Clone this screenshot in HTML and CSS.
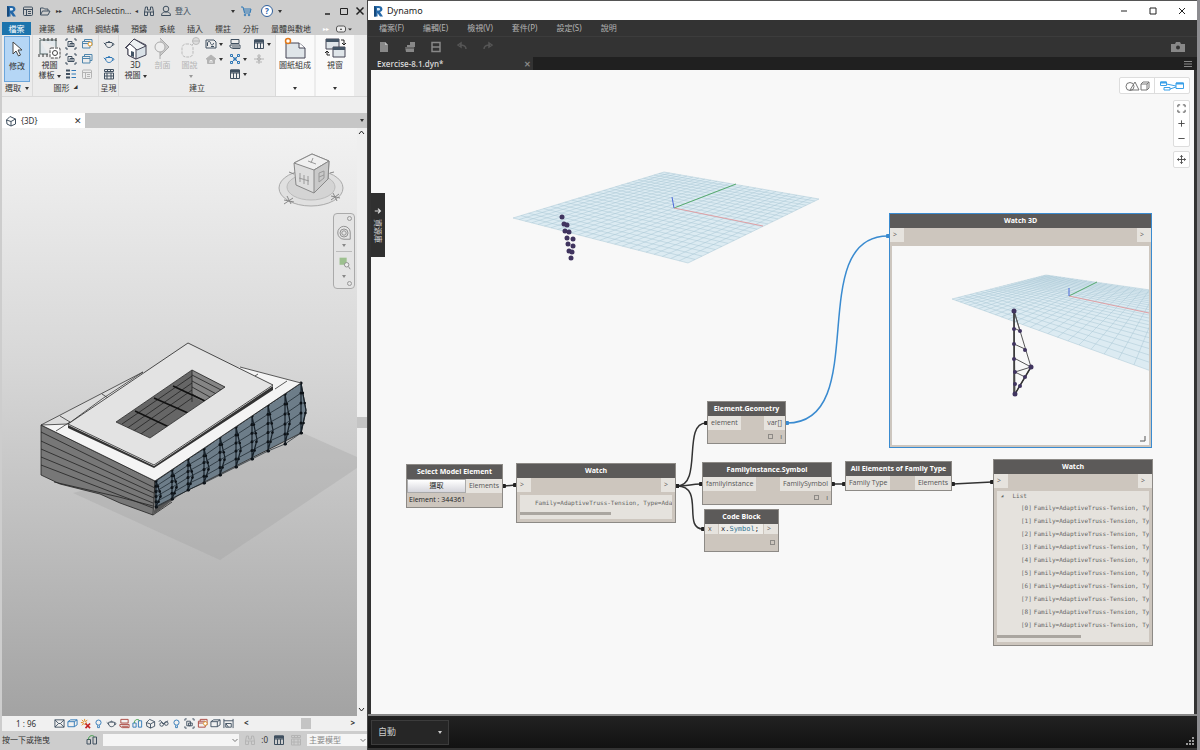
FILE: index.html
```html
<!DOCTYPE html>
<html lang="zh-Hant">
<head>
  <meta charset="UTF-8">
  <meta name="viewport" content="width=device-width, initial-scale=1.0">
  <title>Dynamo</title>
  <link rel="stylesheet" href="styles.css">
</head>
<body>
  <!-- shared icons -->
  <svg class="sprite" aria-hidden="true">
    <symbol id="i-r" viewBox="0 0 12 12"><path d="M2 1h4.500c5 0 5 5.500 1.500 6l3 4.500H8L5.500 8V11.500H2z" fill="#2468a8"/><path d="M5 3h2c1.500 0 1.500 2.500 0 2.500H5z" fill="#dcebf7"/><path d="M2 1l2 1v9.500H2z" fill="#174a7c"/></symbol>
    <symbol id="i-win" viewBox="0 0 12 12"><rect x="1.500" y="2" width="9" height="8.500" rx="1"/><path d="M1.500 4.500h9M4.500 4.500v6M6 6.500h3M6 8.500h3"/></symbol>
    <symbol id="i-open" viewBox="0 0 12 12"><path d="M1.500 10V3h3l1 1H9v2M1.500 10l2-4H11l-2 4z"/></symbol>
    <symbol id="i-find" viewBox="0 0 12 12"><path d="M2.500 2h2v3h3V2h2l1 5v3.500H7.500V7h-3v3.500H1.500V7zM1.500 7h3M7.500 7h3"/></symbol>
    <symbol id="i-user" viewBox="0 0 12 12"><circle cx="6" cy="4" r="2.800"/><path d="M1.500 10.500c0-3 2-3 3-3.500h3c1 .5 3 .5 3 3.500z"/></symbol>
    <symbol id="i-cart" viewBox="0 0 12 12"><path d="M1 2h2l1.500 6h5.500l1-4H3.500M4 6h6.500"/><circle cx="5" cy="10" r=".8"/><circle cx="9" cy="10" r=".8"/></symbol>
    <symbol id="i-box" viewBox="0 0 12 12"><path d="M1 4l3-2h7l-3 2zM1 4v5.500h7V4M8 9.500l3-2V2"/></symbol>
    <symbol id="i-house" viewBox="0 0 12 12"><path d="M1.500 5L5 1.500l5.500 2.500v5L6 11 2 9zM1.500 5L6 6.500v4.500M6 6.500L10.500 4"/></symbol>
    <symbol id="i-home" viewBox="0 0 12 12"><path d="M1 6l5-4 5 4H9.500v4.500h-7V6z" fill="currentColor"/><path d="M5 10V7.500h2V10" stroke="#eee"/></symbol>
    <symbol id="i-crop" viewBox="0 0 12 12"><path d="M1 3V1h2M9 1h2v2M11 9v2H9M3 11H1V9M3 3.500h4v5H3zM5 5.500h4v3H5z"/></symbol>
    <symbol id="i-layers" viewBox="0 0 12 12"><path d="M3.500 3.500v-2h7.500v6H9M1.500 3.500H9v6.500H1.500zM1.500 5.500H9"/></symbol>
    <symbol id="i-gear" viewBox="0 0 12 12"><path d="M3.500 3.500v-2h7.500v6H9M1.500 3.500H9v6.500H1.500zM1.500 5.500H9"/><circle cx="9" cy="6" r="2" stroke="#e09a2c" fill="#fff"/></symbol>
    <symbol id="i-lines" viewBox="0 0 12 12"><path d="M1 2.500h4M1 6h4M1 9.500h4" stroke-width="2"/><path d="M6.500 2.500H11M6.500 6H11M6.500 9.500H11" stroke="#2f78b7"/></symbol>
    <symbol id="i-plan" viewBox="0 0 12 12"><path d="M1 2h8l2 2v6H1z"/><path d="M2.500 8V5c0-2 3-2 3 0s3 3 3 0M6 8.500h3"/></symbol>
    <symbol id="i-pot" viewBox="0 0 12 12"><path d="M3 4.500h6c1.500 3-1 5-3 5s-4-2-3-5zM5 4.500c0-1.500 2-1.500 2 0M3 7L.8 4.800M9.500 5.500c2-.5 2 2-.5 2"/></symbol>
    <symbol id="i-film" viewBox="0 0 12 12"><path d="M1.500 1.500h9v2h-9zM1.500 5h9v6h-9zM4 1.500l1 2M7 1.500l1 2M4 5v6M8 5v6M1.500 8h9"/></symbol>
    <symbol id="i-table" viewBox="0 0 12 12"><path d="M1.500 2h9v8.500h-9zM1.500 5h9M4.500 5v5.500M7.500 5v5.500"/><path d="M1.500 2h9v2h-9z" fill="currentColor"/></symbol>
    <symbol id="i-sheet" viewBox="0 0 12 12"><path d="M2 1.500h8v4H2zM1 7h10v3.500H3.500L1 9z"/><path d="M3 9h7"/></symbol>
    <symbol id="i-nodes" viewBox="0 0 12 12"><path d="M3 3l6 6M9 3L3 9M1.500 1.500h2v2h-2zM8.500 1.500h2v2h-2zM1.500 8.500h2v2h-2zM8.500 8.500h2v2h-2zM5 5h2v2H5z"/></symbol>
    <symbol id="i-scope" viewBox="0 0 12 12"><path d="M6 1v10M1 6h10M4 3h4M3 9h6"/><circle cx="6" cy="6" r="1.500"/></symbol>
    <symbol id="i-bulb" viewBox="0 0 12 12"><circle cx="6" cy="5" r="2.800"/><path d="M5 8v2.500h2V8"/></symbol>
    <symbol id="i-sun" viewBox="0 0 12 12"><path d="M5 1v2M1 5h2M2 2l1.500 1.500M8 2L6.500 3.500M2 8l1.500-1.500" stroke="#e08a1c"/><circle cx="5" cy="5" r="1.800" stroke="#e08a1c"/><path d="M6 6l5 5M11 6l-5 5" stroke="#c32222" stroke-width="1.800"/></symbol>
    <symbol id="i-mail" viewBox="0 0 12 12"><path d="M1 2h10v8H1zM1 2l4 4h2l4-4M1 10l4-4M11 10L7 6"/></symbol>
    <symbol id="i-glass" viewBox="0 0 12 12"><path d="M1 4c1-2 2-2 4 2h2l4-3"/><circle cx="4" cy="7" r="2"/><circle cx="9" cy="6" r="2"/></symbol>
    <symbol id="i-dims" viewBox="0 0 12 12"><path d="M1 1v10M11 1v10M1 3h10M3 6h6v4H3zM3 6l3 4"/></symbol>
    <symbol id="i-plug" viewBox="0 0 12 12"><path d="M1 10V5.500h3.500V10zM7 10V3h3.500v7z"/><path d="M2.500 5.500c0-4 4-5 6-2.500" stroke="#3b9b45"/></symbol>
    <symbol id="i-chev" viewBox="0 0 8 8"><path d="M1.500 3L4 5.500 6.500 3" fill="none" stroke="#777"/></symbol>
  </svg>

  <section class="revit" aria-label="Revit">
    <header class="revit-title">
      <svg class="logo"><use href="#i-r"/></svg>
      <button class="ic" aria-label="視窗"><svg><use href="#i-win"/></svg></button>
      <button class="ic" aria-label="開啟"><svg><use href="#i-open"/></svg></button>
      <span class="more">▸▸</span>
      <span class="doc-name">ARCH-Selectin...</span>
      <span class="more">◂</span>
      <button class="ic" aria-label="搜尋"><svg><use href="#i-find"/></svg></button>
      <button class="ic login"><svg><use href="#i-user"/></svg>登入</button>
      <span class="caret push"></span>
      <button class="ic blue" aria-label="商店"><svg><use href="#i-cart"/></svg></button>
      <button class="help" aria-label="說明">?</button>
      <span class="caret"></span>
      <div class="win-buttons">
        <button aria-label="最小化"><svg viewBox="0 0 10 10"><path d="M2 8h5" stroke-width="1.500"/></svg></button>
        <button aria-label="最大化"><svg viewBox="0 0 10 10"><path d="M1.500 2.500h7v6h-7z"/></svg></button>
        <button aria-label="關閉"><svg viewBox="0 0 10 10"><path d="M1.500 1.500l7 7M8.500 1.500l-7 7" stroke-width="1.500"/></svg></button>
      </div>
    </header>

    <nav class="ribbon-tabs">
      <a class="file" href="#">檔案</a>
      <a href="#">建築</a>
      <a href="#">結構</a>
      <a href="#">鋼結構</a>
      <a href="#">預鑄</a>
      <a href="#">系統</a>
      <a href="#">插入</a>
      <a href="#">標註</a>
      <a href="#">分析</a>
      <a href="#">量體與敷地</a>
      <span class="more light">▸▸</span>
      <svg class="toggle" viewBox="0 0 18 10"><rect x="1.500" y="2" width="9" height="6" rx="2" fill="#eee" stroke="#555"/><path d="M5 6l1-2 1 2zM13 4.500h4l-2 2z" fill="#333"/></svg>
    </nav>

    <div class="ribbon">
      <div class="panel p-select">
        <button class="big active"><svg viewBox="0 0 24 24"><path d="M8 5v12l3-3 2.500 5 2-1-2.500-5h4z" fill="#fff" stroke="#444"/></svg>修改</button>
        <span class="panel-name">選取 <i class="caret"></i></span>
      </div>
      <div class="panel p-graphics">
        <div class="tools">
          <button class="big"><svg viewBox="0 0 24 22"><path d="M2 3h16v7M2 3v14h8" fill="#e2e8ec" stroke="#566"/><path d="M2 2v-1M6 1v3M10 1v3M14 1v3M18 1v3M1 17v3M5 17v3M9 17v3" stroke="#333"/><rect x="12" y="11" width="10" height="10" rx="1" fill="#fff" stroke="#444" stroke-dasharray="3 1"/><circle cx="17" cy="16" r="2.500" fill="none" stroke="#444"/></svg>視圖<br>樣板<i class="caret"></i></button>
          <div class="grid two">
            <button class="ic" aria-label="可見性"><svg><use href="#i-crop"/></svg></button>
            <button class="ic sky" aria-label="篩選"><svg><use href="#i-gear"/></svg></button>
            <button class="ic" aria-label="隱藏"><svg><use href="#i-crop"/></svg></button>
            <button class="ic sky" aria-label="圖層"><svg><use href="#i-layers"/></svg></button>
            <button class="ic" aria-label="細線"><svg><use href="#i-lines"/></svg></button>
            <button class="ic off" aria-label="切割"><svg><use href="#i-win"/></svg></button>
          </div>
        </div>
        <span class="panel-name">圖形 <i class="corner">◢</i></span>
      </div>
      <div class="panel p-present">
        <div class="grid one">
          <button class="ic" aria-label="彩現"><svg><use href="#i-pot"/></svg></button>
          <button class="ic blue" aria-label="雲端彩現"><svg><use href="#i-pot"/></svg></button>
          <button class="ic" aria-label="彩現圖庫"><svg><use href="#i-film"/></svg></button>
        </div>
        <span class="panel-name">呈現</span>
      </div>
      <div class="panel p-create">
        <div class="tools">
          <button class="big"><svg viewBox="0 0 24 24"><path d="M2 12L10 3l12 6v10l-10 4-8-4v-7z" fill="#d9e1e7" stroke="#445"/><path d="M2 12l4-5 6 6v10l-8-4v-6z" fill="#fff" stroke="#445"/><path d="M1 12L10 3l12 7-9 4-7-6z" fill="#eef1f3" stroke="#445"/><path d="M7 15l3 1v5l-3-1z" fill="#456"/></svg>3D<br>視圖<i class="caret"></i></button>
          <button class="big off"><svg viewBox="0 0 24 24"><path d="M9 2l9 9-9 9" fill="#ccc" stroke="#aaa"/><circle cx="9" cy="11" r="5" fill="#eee" stroke="#aaa"/><path d="M9 16v7" stroke="#aaa"/></svg>剖面</button>
          <button class="big off"><svg viewBox="0 0 24 24"><rect x="4" y="8" width="11" height="13" rx="4" fill="none" stroke="#bbb" stroke-dasharray="3 1"/><circle cx="18" cy="5" r="3.500" fill="#ddd" stroke="#bbb"/><path d="M14 9l2-2M14 5h8" stroke="#bbb"/></svg>圖說<br><i class="caret"></i></button>
          <div class="grid three">
            <button class="ic drop" aria-label="平面視圖"><svg><use href="#i-plan"/></svg><i class="caret"></i></button>
            <button class="ic" aria-label="複製視圖"><svg><use href="#i-sheet"/></svg></button>
            <button class="ic drop" aria-label="明細表"><svg><use href="#i-table"/></svg><i class="caret"></i></button>
            <button class="ic drop off" aria-label="立面"><svg><use href="#i-home"/></svg><i class="caret"></i></button>
            <button class="ic drop blue" aria-label="圖例"><svg><use href="#i-nodes"/></svg><i class="caret"></i></button>
            <button class="ic off" aria-label="範圍框"><svg><use href="#i-scope"/></svg></button>
            <span></span>
            <button class="ic drop" aria-label="數量"><svg><use href="#i-table"/></svg><i class="caret"></i></button>
          </div>
        </div>
        <span class="panel-name">建立</span>
      </div>
      <div class="panel white">
        <button class="big"><svg viewBox="0 0 24 22"><path d="M3 6h13l6 5v10H3z" fill="#dfe5e9" stroke="#445"/><path d="M16 6v5h6" fill="#fff" stroke="#445"/><circle cx="5" cy="4" r="2.500" fill="#fff" stroke="#e07a1c" stroke-width="1.500"/></svg>圖紙組成</button>
        <span class="panel-name"><i class="caret"></i></span>
      </div>
      <div class="panel white">
        <button class="big"><svg viewBox="0 0 24 22"><path d="M3 2h13v10H3zM10 10h12v10H10z" fill="#dfe5e9" stroke="#445"/><path d="M3 2h13v3H3zM10 10h12v3H10z" fill="#456"/><path d="M18 3h3v5M19 6l2 2 2-2M7 18H4v-4M2 16l2-2 2 2" fill="none" stroke="#222"/></svg>視窗</button>
        <span class="panel-name"><i class="caret"></i></span>
      </div>
    </div>
    <div class="options-bar"></div>

    <div class="view-tabs">
      <div class="view-tab"><svg class="small"><use href="#i-house"/></svg>{3D}<button aria-label="關閉視圖">✕</button></div>
      <i class="caret"></i>
    </div>

    <div class="view-area">
      <div class="viewport">
        <svg class="model" width="355" height="588" viewBox="2 128 355 588">
          <path d="M73 493L303 433l54 24v11L220 560z" fill="#999" opacity=".28"/>
          <!-- outer walls -->
          <path d="M41 425L155 481l-2 34-33-12-20-9-40-10-19-9z" fill="#777" stroke="#222"/>
          <path d="M41 432l114 56M41 441l113 52M41 449l113 49M41 457l112 46M41 465l112 43" stroke="#222" fill="none"/>
          <path d="M54 482l65 15 34 9M153 515l19-13" stroke="#222" fill="none"/>
          <path d="M155 481L301 383l5 27-5 23-146 74z" fill="#6d7d89" stroke="#222"/>
          <path d="M155 507l-2 8 24-18z" fill="#555"/>
          <g id="truss"></g>
          <!-- roof -->
          <path d="M41 425L143 372l98-5 60 16-146 98z" fill="#f4f4f4"/>
          <path d="M41 425L143 372l-41 27-34 25z" fill="#dcdcdc" stroke="#333"/>
          <path d="M60 416l10 6-14 9M102 394l6 4M240 367l61 16M258 374l-3 2M287 381l-12 8" stroke="#333" fill="none"/>
          <path d="M41 425L155 481 301 383" fill="none" stroke="#222"/>
          <path d="M68 425l86 41L273 386v4L154 468 68 428z" fill="#333"/>
          <path d="M188 343L273 385 154 465 68 424z" fill="#e3e3e3" stroke="#222"/>
          <!-- courtyard -->
          <clipPath id="court"><path d="M192 370l33 17-75 51-34-16z"/></clipPath>
          <g clip-path="url(#court)">
            <path d="M192 370l33 17-75 51-34-16z" fill="#666"/>
            <path d="M192 370v26l17 9 20-18z" fill="#858585"/>
            <path d="M192 370v32M192 375l33 17M192 381l30 16M192 387l25 14M192 394l18 10M192 376l-70 48M192 383l-66 46M192 390l-60 42M192 398l-54 38" stroke="#222" fill="none"/>
            <path d="M173 386l32 15M154 398l34 15M135 411l34 16" stroke="#111" stroke-width="1.500"/>
          </g>
          <path d="M192 370l33 17-75 51-34-16z" fill="none" stroke="#222"/>
        </svg>

        <svg class="view-cube" width="66" height="58" viewBox="278 151 66 58">
          <ellipse cx="311" cy="188" rx="32" ry="18" fill="#e0e0e0" stroke="#aaa"/>
          <ellipse cx="311" cy="187" rx="24" ry="13" fill="#d4d4d4" stroke="#bbb"/>
          <path d="M312 154l17 7-1 18-14 14-18-8-2-22z" fill="#ddd" stroke="#888"/>
          <path d="M294 163l20 7 15-9-17-7z" fill="#f0f0f0" stroke="#888"/>
          <path d="M314 170l15-9-1 18-14 14z" fill="#c9c9c9" stroke="#888"/>
          <path d="M308 161l8 3M313 158l-2 5M300 173v9M304 175v9M308 176v9M299 178l10 3M319 173l5-2v7l-5 4zM319 177l5-2" stroke="#999" fill="none"/>
          <path d="M284 200l10 2M287 196l4 8M284 204l9-6M331 196l9 2M333 193l4 8M331 200l8-6M289 172l5 2M330 173l4-1" stroke="#888"/>
        </svg>

        <div class="nav-bar">
          <i class="dot"></i>
          <svg viewBox="0 0 18 18"><path d="M2 9a7 7 0 0 1 14-1v8H9a7 7 0 0 1-7-7z"/><circle cx="9" cy="9" r="4.500"/><circle cx="9" cy="9" r="2.500"/></svg>
          <i class="caret"></i>
          <hr>
          <svg viewBox="0 0 18 18"><path d="M4 3h8v8H4z" fill="#9dc08f" stroke="none"/><circle cx="12" cy="11" r="2.500" fill="#eee"/><path d="M14 13l2 3"/></svg>
          <i class="caret"></i>
          <i class="dot"></i>
        </div>
      </div>
      <div class="scroll-v"><svg class="small"><path d="M3 6l2.500-3L8 6" fill="none" stroke="#222"/></svg><i class="thumb"></i><svg class="small"><path d="M3 4l2.500 3L8 4" fill="none" stroke="#222"/></svg></div>
    </div>

    <div class="view-controls">
      <span class="scale">1 : 96</span>
      <button class="ic" aria-label="比例"><svg><use href="#i-mail"/></svg></button>
      <button class="ic blue" aria-label="視覺型式"><svg><use href="#i-box"/></svg></button>
      <button class="ic" aria-label="太陽路徑"><svg><use href="#i-sun"/></svg></button>
      <button class="ic blue" aria-label="陰影"><svg><use href="#i-bulb"/></svg></button>
      <button class="ic" aria-label="彩現"><svg><use href="#i-pot"/></svg></button>
      <button class="ic red" aria-label="裁剪"><svg><use href="#i-sheet"/></svg></button>
      <button class="ic blue" aria-label="裁剪區域"><svg><use href="#i-plug"/></svg></button>
      <button class="ic" aria-label="鎖定"><svg><use href="#i-house"/></svg></button>
      <button class="ic" aria-label="隱藏"><svg><use href="#i-glass"/></svg></button>
      <button class="ic blue" aria-label="顯示"><svg><use href="#i-bulb"/></svg></button>
      <button class="ic" aria-label="性質"><svg><use href="#i-crop"/></svg></button>
      <button class="ic red" aria-label="分析"><svg><use href="#i-gear"/></svg></button>
      <button class="ic" aria-label="位移"><svg><use href="#i-box"/></svg></button>
      <button class="ic" aria-label="約束"><svg><use href="#i-dims"/></svg></button>
      <span class="scroll-h"><b>&lt;</b><i class="thumb"></i><b>&gt;</b></span>
    </div>

    <footer class="revit-status">
      <span class="hint">按一下或拖曳</span>
      <svg class="small"><use href="#i-plug"/></svg>
      <span class="select grow"><select aria-label="工作集"><option></option></select><svg><use href="#i-chev"/></svg></span>
      <svg class="small off"><use href="#i-find"/></svg><span>:0</span>
      <svg class="small"><use href="#i-table"/></svg>
      <svg class="small off"><use href="#i-film"/></svg>
      <span class="select"><select aria-label="設計選項"><option>主要模型</option></select><svg><use href="#i-chev"/></svg></span>
    </footer>
  </section>

  <section class="dynamo" aria-label="Dynamo">
    <header class="dyn-title">
      <svg class="logo"><use href="#i-r"/></svg>
      <span>Dynamo</span>
      <div class="win-buttons wide">
        <button aria-label="最小化"><svg viewBox="0 0 10 10"><path d="M2 5h6"/></svg></button>
        <button aria-label="最大化"><svg viewBox="0 0 10 10"><path d="M2 2h6v6H2z"/></svg></button>
        <button aria-label="關閉"><svg viewBox="0 0 10 10"><path d="M2 2l6 6M8 2L2 8"/></svg></button>
      </div>
    </header>
    <nav class="dyn-menu">
      <a href="#">檔案(F)</a>
      <a href="#">編輯(E)</a>
      <a href="#">檢視(V)</a>
      <a href="#">套件(P)</a>
      <a href="#">設定(S)</a>
      <a href="#">說明</a>
    </nav>
    <div class="dyn-tools">
      <button aria-label="新建"><svg viewBox="0 0 12 12"><path d="M2 1h5l3 3v7H2z" fill="#888"/><path d="M7 1v3h3z" fill="#bbb"/></svg></button>
      <button aria-label="開啟"><svg viewBox="0 0 12 12"><path d="M1 6h2V4h3V1h5v5h-1v5H2z" fill="#888"/><path d="M1 7h10" stroke="#444"/></svg></button>
      <button aria-label="儲存"><svg viewBox="0 0 12 12"><path d="M2 1.500h8v9H2zM2 6h8" fill="none" stroke="#888" stroke-width="1.500"/></svg></button>
      <button aria-label="復原"><svg viewBox="0 0 12 12"><path d="M2 4l3-2v4zM4 4c3 0 6 1 6 4" stroke="#555" fill="none" stroke-width="1.500"/></svg></button>
      <button aria-label="重做"><svg viewBox="0 0 12 12"><path d="M10 4L7 2v4zM8 4c-3 0-6 1-6 4" stroke="#555" fill="none" stroke-width="1.500"/></svg></button>
      <button class="camera" aria-label="匯出影像"><svg viewBox="0 0 14 12"><path d="M0 3h4l1-2h4l1 2h4v8H0z" fill="#888"/><circle cx="7" cy="6.500" r="2" fill="#333"/></svg></button>
    </div>
    <div class="dyn-tabs">
      <div class="dyn-tab">Exercise-8.1.dyn*<button aria-label="關閉分頁">✕</button></div>
      <button class="burger" aria-label="分頁清單"><svg viewBox="0 0 8 8"><path d="M0 1.500h8M0 4h8M0 6.500h8" stroke="#888"/></svg></button>
    </div>

    <main class="canvas">
      <svg class="layer">
        <marker id="pin" viewBox="0 0 4 4" refX="2" refY="2" markerWidth="3" markerHeight="3"><circle cx="2" cy="2" r="2" fill="#222"/></marker>
        <marker id="pin-on" viewBox="0 0 4 4" refX="2" refY="2" markerWidth="3" markerHeight="3"><circle cx="2" cy="2" r="2" fill="#3a8bd0"/></marker>
        <g transform="translate(-371 -70)">
          <g class="ground" data-quad="513,218 664,172 819,199 688,263"></g>
          <path d="M674 208l62-24" stroke="#57ab6e"/>
          <path d="M674 208l89 18" stroke="#e0a0a5"/>
          <path d="M674 208l-2-11" stroke="#4a68d8"/>
          <g class="points">
            <circle cx="562" cy="217" r="2.500"/><circle cx="564" cy="224" r="2.500"/><circle cx="567" cy="225" r="2.500"/>
            <circle cx="565" cy="231" r="2.500"/><circle cx="569" cy="232" r="2.500"/><circle cx="567" cy="238" r="2.500"/>
            <circle cx="573" cy="239" r="2.500"/><circle cx="568" cy="244" r="2.500"/><circle cx="573" cy="246" r="2.500"/>
            <circle cx="569" cy="251" r="2.500"/><circle cx="572" cy="252" r="2.500"/><circle cx="571" cy="258" r="2.500"/>
          </g>
          <g class="wires">
            <path d="M504 486l11-1"/>
            <path d="M833 484h11"/>
            <path d="M953 484l39-2"/>
            <path d="M677 486c26 0 5-63 29-63"/>
            <path d="M677 486c14 0 12-2 24-2"/>
            <path d="M677 486c28 0 5 43 26 43"/>
            <path class="selected" d="M787 423c86 0 16-187 101-187"/>
          </g>
        </g>
      </svg>

      <button class="library"><svg viewBox="0 0 10 10"><path d="M1 5h7M5 2l3 3-3 3" fill="none" stroke="#ddd" stroke-width="1.500"/></svg><span>資源庫</span></button>

      <div class="view-switch">
        <button aria-label="背景 3D 預覽"><svg viewBox="0 0 26 12"><circle cx="6" cy="6.500" r="4"/><path d="M6 10l5-8 4 8zM17 4h6v6h-6zM17 4l2-2h6v6l-2 2M23 4l2-2"/></svg></button>
        <button class="on" aria-label="圖形視圖"><svg viewBox="0 0 26 12"><path d="M1.500 2h6v3.500h-6zM5 7.500h6V10H5zM17 3h7.500v5.500H17z"/><path d="M1.500 2.500h6M17 3.500h7.500" stroke-width="2"/><path d="M7.500 4l9.500 2M11 9l6-2"/></svg></button>
      </div>
      <div class="zoom-buttons">
        <button aria-label="縮放至最佳"><svg viewBox="0 0 10 10"><path d="M1 3.500V1h2.500M6.500 1H9v2.500M9 6.500V9H6.500M3.500 9H1V6.500"/></svg></button>
        <button aria-label="放大"><svg viewBox="0 0 10 10"><path d="M5 1.500v7M1.500 5h7"/></svg></button>
        <button aria-label="縮小"><svg viewBox="0 0 10 10"><path d="M1.500 5h7"/></svg></button>
      </div>
      <div class="zoom-buttons pan">
        <button aria-label="平移"><svg viewBox="0 0 10 10"><path d="M5 .5v9M.5 5h9M3.500 2L5 .5 6.500 2M3.500 8L5 9.500 6.500 8M2 3.500L.5 5 2 6.500M8 3.500L9.500 5 8 6.500"/></svg></button>
      </div>

      <article class="node n-select">
        <h3>Select Model Element</h3>
        <div class="ports"><button class="pick">選取</button><span class="port">Elements</span></div>
        <p>Element : 344361</p>
      </article>

      <article class="node n-watch">
        <h3>Watch</h3>
        <div class="ports"><span class="port arrow">&gt;</span><span class="port arrow">&gt;</span></div>
        <div class="output"><div class="line">Family=AdaptiveTruss-Tension, Type=Ada</div><i class="bar"></i></div>
      </article>

      <article class="node n-geometry">
        <h3>Element.Geometry</h3>
        <div class="ports"><span class="port">element</span><span class="port">var[]</span></div>
        <div class="lacing"><i class="square"></i><b>ı</b></div>
      </article>

      <article class="node n-symbol">
        <h3>FamilyInstance.Symbol</h3>
        <div class="ports"><span class="port">familyInstance</span><span class="port">FamilySymbol</span></div>
        <div class="lacing"><i class="square"></i><b>ı</b></div>
      </article>

      <article class="node n-code">
        <h3>Code Block</h3>
        <div class="ports"><span class="port">x</span><code>x.<em>Symbol</em>;</code><span class="port">&gt;</span></div>
        <div class="lacing"><i class="square"></i></div>
      </article>

      <article class="node n-family">
        <h3>All Elements of Family Type</h3>
        <div class="ports"><span class="port">Family Type</span><span class="port">Elements</span></div>
      </article>

      <article class="node n-watch3d">
        <h3>Watch 3D</h3>
        <div class="ports"><span class="port arrow">&gt;</span><span class="port arrow">&gt;</span></div>
        <div class="preview">
          <svg width="257" height="198" viewBox="892 246 257 198">
            <g class="ground" data-quad="952,299 1046,275 1171,293 1151,371"></g>
            <path d="M1069 296l28-14" stroke="#57ab6e"/>
            <path d="M1069 296l80 17" stroke="#e0a0a5"/>
            <path d="M1069 296v-8" stroke="#4a68d8"/>
            <path d="M1014 311l1 83 16-27zl6 20M1014 344l11 5M1014 358l17 9-16 5M1015 372l10 5M1014 328l6 3" fill="none" stroke="#555"/>
            <path d="M1015 394l16-27M1014 311v83" stroke="#333" stroke-width="1.500"/>
            <g class="points">
              <circle cx="1014" cy="311" r="2.500"/><circle cx="1014" cy="329" r="2"/><circle cx="1014" cy="344" r="2"/>
              <circle cx="1014" cy="359" r="2"/><circle cx="1015" cy="372" r="2"/><circle cx="1015" cy="384" r="2"/>
              <circle cx="1015" cy="394" r="2.500"/><circle cx="1020" cy="331" r="2"/><circle cx="1025" cy="350" r="2"/>
              <circle cx="1031" cy="367" r="2.500"/><circle cx="1025" cy="377" r="2"/><circle cx="1020" cy="386" r="2"/>
            </g>
            <path d="M1140 441h5v-5" fill="none" stroke="#555"/>
          </svg>
        </div>
      </article>

      <article class="node n-list">
        <h3>Watch</h3>
        <div class="ports"><span class="port arrow">&gt;</span><span class="port arrow">&gt;</span></div>
        <div class="output">
          <div class="root"><i>◢</i>List</div>
          <ul>
            <li><b>[0]</b>Family=AdaptiveTruss-Tension, Ty</li>
            <li><b>[1]</b>Family=AdaptiveTruss-Tension, Ty</li>
            <li><b>[2]</b>Family=AdaptiveTruss-Tension, Ty</li>
            <li><b>[3]</b>Family=AdaptiveTruss-Tension, Ty</li>
            <li><b>[4]</b>Family=AdaptiveTruss-Tension, Ty</li>
            <li><b>[5]</b>Family=AdaptiveTruss-Tension, Ty</li>
            <li><b>[6]</b>Family=AdaptiveTruss-Tension, Ty</li>
            <li><b>[7]</b>Family=AdaptiveTruss-Tension, Ty</li>
            <li><b>[8]</b>Family=AdaptiveTruss-Tension, Ty</li>
            <li><b>[9]</b>Family=AdaptiveTruss-Tension, Ty</li>
          </ul>
          <i class="bar"></i>
        </div>
      </article>
    </main>

    <footer class="run-bar">
      <span class="run-mode"><select aria-label="執行模式"><option>自動</option></select><i class="caret"></i></span>
      <svg class="grip" viewBox="0 0 8 8"><path d="M6 0h2v2H6zM3 3h2v2H3zM6 3h2v2H6zM0 6h2v2H0zM3 6h2v2H3zM6 6h2v2H6z" fill="#999"/></svg>
    </footer>
  </section>

  <script src="script.js"></script>
</body>
</html>
```

FILE: styles.css
```css
*, *::before, *::after {
  box-sizing: border-box;
  margin: 0;
  padding: 0;
}

body {
  display: flex;
  height: 100vh;
  overflow: hidden;
  background: #3a3a3a;
  color: #333;
  font-family: "Noto Sans", "Noto Sans CJK TC", sans-serif;
  font-size: 8px;
  line-height: 10px;
}

a {
  color: inherit;
  text-decoration: none;
}

button {
  border: 0;
  background: none;
  color: inherit;
  font: inherit;
}

select {
  width: 100%;
  border: 0;
  background: none;
  color: inherit;
  font: inherit;
  appearance: none;
}

i, em {
  font-style: normal;
}

svg {
  flex: none;
}

.sprite {
  position: absolute;
  width: 0;
  height: 0;
}

.caret {
  display: inline-block;
  flex: none;
  border: 2px solid transparent;
  border-top: 3px solid #333;
  border-bottom: 0;
}

.logo {
  width: 12px;
  height: 12px;
}

.ic,
.small {
  color: #405060;
}

.ic svg,
.small {
  width: 12px;
  height: 12px;
  fill: none;
  stroke: currentColor;
}

.ic {
  display: flex;
  align-items: center;
}

.blue { color: #2f78b7; }
.sky { color: #4f86ad; }
.red { color: #a8443c; }
.off { color: #b4b4b4; }

/* ---------- Revit ---------- */

.revit {
  display: flex;
  flex: 0 0 368px;
  flex-direction: column;
  padding: 0 0 2px 2px;
  background: #cdcdcd;
  border-right: 1px solid #444;
}

.revit-title {
  display: flex;
  align-items: center;
  gap: 5px;
  height: 22px;
  padding: 0 2px 0 3px;
}

.doc-name {
  width: 58px;
  margin-left: 5px;
  white-space: nowrap;
}

.more {
  font-size: 6px;
}

.more.light {
  color: #fff;
}

.login {
  gap: 3px;
}

.push {
  margin-left: auto;
}

.help {
  width: 12px;
  height: 12px;
  margin-left: 4px;
  border: 1px solid #2f5f9b;
  border-radius: 50%;
  background: #fff;
  color: #1f5fae;
  font-weight: 700;
}

.win-buttons {
  display: flex;
  gap: 6px;
  margin-left: 36px;
}

.win-buttons svg {
  display: block;
  width: 10px;
  height: 10px;
  fill: none;
  stroke: #222;
}

.ribbon-tabs {
  display: flex;
  align-items: center;
  gap: 12px;
  height: 13px;
  white-space: nowrap;
}

.ribbon-tabs .file {
  width: 29px;
  margin-right: -4px;
  background: #1c74ad;
  color: #fff;
  line-height: 13px;
  text-align: center;
}

.ribbon-tabs .toggle {
  width: 18px;
  height: 10px;
  margin-left: -6px;
}

.ribbon {
  display: flex;
  height: 61px;
  background: #ececec;
}

.panel {
  display: flex;
  flex: none;
  flex-direction: column;
  justify-content: space-between;
  align-items: center;
  padding: 1px 0 2px;
  border-right: 1px solid #dadada;
}

.p-select { width: 31px; }
.p-graphics { width: 66px; }
.p-present { width: 20px; }
.p-create { width: 157px; }

.panel.white {
  width: 38px;
  margin-right: 2px;
  background: #fafafa;
  border-right: 0;
}

.panel-name {
  display: flex;
  align-items: center;
  gap: 4px;
  height: 12px;
}

.corner {
  font-size: 4px;
}

.tools {
  display: flex;
  align-items: flex-start;
  gap: 3px;
}

.big {
  width: 24px;
  white-space: nowrap;
}

.big svg {
  display: block;
  width: 24px;
  height: 24px;
  margin: 0 auto;
}

.big .caret {
  margin-left: 2px;
}

.big.active {
  width: 26px;
  height: 47px;
  padding-bottom: 10px;
  border: 1px solid #6ba6dc;
  background: #b5d6f5;
}

.white .big {
  width: 36px;
}

.big.off .caret {
  border-top-color: #999;
}

.grid {
  display: grid;
  align-content: start;
  gap: 3px;
  padding-top: 2px;
}

.two { grid-template-columns: 13px 13px; }
.three { grid-template-columns: 21px 21px 18px; }

.drop {
  gap: 2px;
}

.options-bar {
  height: 17px;
  border-top: 1px solid #d8d8d8;
  background: #eee;
}

.view-tabs {
  display: flex;
  justify-content: space-between;
  align-items: center;
  height: 15px;
  padding-right: 3px;
  background: #c6c6c6;
}

.view-tab {
  display: flex;
  align-items: center;
  gap: 4px;
  width: 83px;
  height: 15px;
  padding: 0 3px;
  background: #fff;
}

.view-tab button {
  margin-left: auto;
  font-size: 9px;
}

.view-area {
  display: flex;
  flex: 1;
  min-height: 0;
}

.viewport {
  position: relative;
  flex: 1;
  overflow: hidden;
  background: linear-gradient(#f2f2f2, #d7d7d7 40%, #a3a3a3);
}

.model {
  display: block;
  stroke-width: 0.8;
}

.truss-line {
  fill: none;
  stroke: #18222a;
}

.truss-dot {
  fill: #0c1116;
}

.view-cube {
  position: absolute;
  top: 23px;
  right: 13px;
}

.nav-bar {
  position: absolute;
  top: 85px;
  right: 2px;
  display: flex;
  flex-direction: column;
  justify-content: space-between;
  align-items: center;
  width: 22px;
  height: 76px;
  padding: 2px;
  border: 1px solid #aaa;
  border-radius: 4px;
  background: #e4e4e4;
}

.nav-bar svg {
  width: 16px;
  height: 16px;
  fill: none;
  stroke: #888;
}

.nav-bar hr {
  width: 16px;
  border: 0;
  border-top: 1px solid #bbb;
}

.nav-bar .caret {
  border-top-color: #888;
}

.dot {
  align-self: flex-end;
  width: 5px;
  height: 5px;
  border: 1px solid #999;
  border-radius: 50%;
}

.scroll-v {
  display: flex;
  flex-direction: column;
  justify-content: space-between;
  align-items: center;
  width: 10px;
  background: #efefef;
}

.thumb {
  width: 10px;
  height: 11px;
  background: #c4c4c4;
}

.view-controls {
  display: flex;
  align-items: center;
  gap: 2px;
  height: 15px;
  background: #f0f0f0;
}

.view-controls .ic svg {
  width: 11px;
  height: 11px;
}

.scale {
  width: 50px;
  padding-left: 14px;
}

.scroll-h {
  display: flex;
  flex: 1;
  justify-content: space-between;
  padding: 0 12px 0 8px;
}

.scroll-h .thumb {
  margin-left: 12px;
}

.revit-status {
  display: flex;
  align-items: center;
  gap: 5px;
  height: 17px;
}

.hint {
  width: 79px;
}

.select {
  display: flex;
  align-items: center;
  width: 60px;
  height: 12px;
  padding-left: 2px;
  background: #f5f5f5;
  color: #888;
}

.select.grow {
  flex: 1;
}

.select svg {
  width: 8px;
  height: 8px;
}

/* ---------- Dynamo ---------- */

.dynamo {
  display: flex;
  flex: 1;
  flex-direction: column;
  min-width: 0;
  padding-bottom: 2px;
  border-right: 3px solid #8c8c90;
  background: #333;
}

.dyn-title {
  display: flex;
  align-items: center;
  gap: 3px;
  height: 20px;
  padding-left: 4px;
  border-top: 1px solid #555;
  background: #fff;
  color: #222;
  font-size: 9px;
}

.win-buttons.wide {
  gap: 19px;
  margin: 0 10px 0 auto;
}

.dyn-menu {
  display: flex;
  align-items: center;
  gap: 19px;
  height: 16px;
  padding-left: 11px;
  color: #b4b4b4;
}

.dyn-tools {
  display: flex;
  align-items: center;
  gap: 14px;
  height: 21px;
  padding: 0 12px 0 10px;
  border-top: 1px solid #3c3c3c;
}

.dyn-tools svg {
  display: block;
  width: 12px;
  height: 12px;
}

.camera {
  margin-left: auto;
}

.dyn-tools .camera svg {
  width: 14px;
}

.dyn-tabs {
  display: flex;
  justify-content: space-between;
  align-items: center;
  height: 13px;
  margin-left: 3px;
  padding-right: 5px;
  background: #202020;
}

.dyn-tab {
  display: flex;
  justify-content: space-between;
  align-items: center;
  width: 162px;
  height: 13px;
  padding: 0 2px 0 6px;
  background: #333;
  color: #d6d6d6;
  font-family: "Open Sans", sans-serif;
  font-weight: 600;
}

.dyn-tab button {
  color: #888;
}

.burger svg {
  display: block;
  width: 8px;
  height: 8px;
}

.canvas {
  position: relative;
  flex: 1;
  min-height: 0;
  margin: 0 3px;
  overflow: hidden;
  background: #f8f8f8;
  font-family: "Open Sans", "Noto Sans CJK TC", sans-serif;
}

.layer {
  position: absolute;
  width: 100%;
  height: 100%;
}

.ground-plane {
  fill: #dcebf2;
}

.ground-line {
  stroke: #a9c6d4;
  stroke-width: 0.5;
}

.points {
  fill: #40345f;
}

.wires {
  fill: none;
  stroke: #333;
  stroke-width: 1.5;
}

.wires path {
  marker-start: url(#pin);
  marker-end: url(#pin);
}

.wires .selected {
  stroke: #3a8bd0;
  marker-start: url(#pin-on);
  marker-end: url(#pin-on);
}

.library {
  position: absolute;
  top: 123px;
  left: 0;
  display: flex;
  flex-direction: column;
  align-items: center;
  gap: 4px;
  width: 14px;
  height: 64px;
  padding-top: 14px;
  background: #303030;
  color: #ddd;
}

.library svg {
  width: 8px;
  height: 8px;
}

.library span {
  writing-mode: vertical-rl;
  text-orientation: sideways;
}

.view-switch {
  position: absolute;
  top: 7px;
  right: 4px;
  display: flex;
  border: 1px solid #ddd;
  border-radius: 2px;
  background: #fff;
}

.view-switch button {
  height: 15px;
  padding: 0 4px;
}

.view-switch button + button {
  border-left: 1px solid #ddd;
}

.view-switch svg {
  display: block;
  width: 26px;
  height: 12px;
  fill: none;
  stroke: #777;
}

.view-switch .on svg {
  stroke: #3ba0e8;
}

.zoom-buttons {
  position: absolute;
  top: 30px;
  right: 4px;
  width: 17px;
  border: 1px solid #ddd;
  border-radius: 2px;
  background: #fff;
}

.zoom-buttons.pan {
  top: 81px;
}

.zoom-buttons button {
  display: flex;
  justify-content: center;
  align-items: center;
  width: 100%;
  height: 15px;
}

.zoom-buttons svg {
  width: 9px;
  height: 9px;
  fill: none;
  stroke: #444;
}

.node {
  position: absolute;
  display: flex;
  flex-direction: column;
  border: 1px solid #8d8a86;
  background: #cdc6be;
  color: #555;
  font-size: 7px;
}

.node h3 {
  height: 14px;
  background: #5c5a59;
  color: #fff;
  font-size: 7px;
  line-height: 14px;
  text-align: center;
  white-space: nowrap;
}

.node p {
  padding: 2px;
  color: #222;
}

.n-select { left: 35px; top: 394px; width: 97px; height: 44px; }
.n-watch { left: 145px; top: 393px; width: 160px; height: 60px; }
.n-geometry { left: 336px; top: 331px; width: 79px; height: 43px; }
.n-symbol { left: 331px; top: 392px; width: 130px; height: 43px; }
.n-code { left: 333px; top: 439px; width: 75px; height: 43px; }
.n-family { left: 474px; top: 391px; width: 107px; height: 30px; }
.n-watch3d { left: 518px; top: 143px; width: 263px; height: 235px; border-color: #3a8bd0; }
.n-list { left: 622px; top: 389px; width: 160px; height: 187px; }

.ports {
  display: flex;
  justify-content: space-between;
  height: 14px;
  line-height: 14px;
}

.port {
  padding: 0 3px;
  background: #e6e3de;
  white-space: nowrap;
}

.port.arrow {
  width: 14px;
}

.pick {
  flex: 1;
  border: 1px solid #aaa;
  background: linear-gradient(#fff, #d5d5dc);
  color: #222;
  line-height: 10px;
}

.lacing {
  display: flex;
  flex: 1;
  justify-content: flex-end;
  align-items: center;
  gap: 7px;
  padding-right: 3px;
}

.lacing b {
  font-weight: 400;
}

.square {
  width: 5px;
  height: 5px;
  border: 1px solid #8d8a86;
}

.n-code .ports {
  height: 10px;
  line-height: 10px;
}

.n-code code {
  flex: 1;
  margin: 0 1px;
  padding: 0 2px;
  background: #eeece8;
  color: #222;
  font-family: "DejaVu Sans Mono", monospace;
}

.n-code .port:last-child {
  width: 14px;
}

.n-code .port:first-child {
  width: 13px;
}

.n-code em {
  color: #2e7390;
}

.output {
  display: flex;
  flex: 1;
  flex-direction: column;
  margin: 3px;
  overflow: hidden;
  background: #e5e2dd;
  color: #666;
  font-family: "DejaVu Sans Mono", monospace;
  font-size: 6px;
  white-space: nowrap;
}

.output .line {
  padding: 3px 0 0 15px;
}

.bar {
  width: 60%;
  height: 3px;
  margin: auto 0 4px;
  background: #aaa6a0;
}

.n-list .bar {
  width: 55%;
}

.output .root {
  display: flex;
  gap: 9px;
  padding-left: 4px;
}

.root i {
  font-size: 4px;
}

.output ul {
  list-style: none;
}

.output li {
  padding-left: 24px;
  line-height: 13px;
}

.output li b {
  margin-right: 2px;
  font-weight: 400;
}

.preview {
  flex: 1;
  margin: 4px 2px 2px;
  overflow: hidden;
  background: #f8f8f8;
}

.run-bar {
  display: flex;
  justify-content: space-between;
  align-items: center;
  height: 34px;
  padding: 0 3px;
  border-top: 2px solid #888;
  background: linear-gradient(#222, #121212);
}

.run-mode {
  display: flex;
  align-items: center;
  width: 78px;
  height: 25px;
  padding: 0 6px;
  border: 1px solid #3c3c3c;
  background: #262626;
  color: #ccc;
  font-size: 9px;
}

.run-mode .caret {
  border-top-color: #ccc;
}

.grip {
  align-self: flex-end;
  width: 8px;
  height: 8px;
  margin-bottom: 3px;
}
```

FILE: script.js
```js
const NS = "http://www.w3.org/2000/svg";

function add(parent, tag, attrs) {
  const el = document.createElementNS(NS, tag);
  for (const key in attrs) el.setAttribute(key, attrs[key]);
  parent.appendChild(el);
}

// perspective mapping of the unit square onto four corners
function project([a, b, c, d]) {
  const sx = a[0] - b[0] + c[0] - d[0];
  const sy = a[1] - b[1] + c[1] - d[1];
  const x1 = b[0] - c[0], x2 = d[0] - c[0];
  const y1 = b[1] - c[1], y2 = d[1] - c[1];
  const det = x1 * y2 - x2 * y1;
  const g = (sx * y2 - x2 * sy) / det;
  const h = (x1 * sy - sx * y1) / det;
  return (u, v) => {
    const w = g * u + h * v + 1;
    return [0, 1].map(k =>
      ((b[k] - a[k] + g * b[k]) * u + (d[k] - a[k] + h * d[k]) * v + a[k]) / w);
  };
}

document.querySelectorAll(".ground").forEach(el => {
  const at = project(el.dataset.quad.split(" ").map(p => p.split(",").map(Number)));
  const steps = 24;
  add(el, "polygon", { class: "ground-plane", points: el.dataset.quad });
  for (let i = 0; i <= steps; i++) {
    const t = i / steps;
    add(el, "path", { class: "ground-line", d: `M${at(t, 0)}L${at(t, 1)}M${at(0, t)}L${at(1, t)}` });
  }
});

// facade trusses: [x, top, bottom]
const trusses = [
  [156, 481, 507], [172, 470, 499], [188, 459, 490], [204, 449, 483], [220, 437, 475],
  [236, 427, 467], [252, 416, 459], [268, 405, 451], [285, 394, 444], [301, 383, 433]
];
const truss = document.getElementById("truss");

trusses.forEach(([x, top, bottom], i) => {
  const h = bottom - top;
  const next = trusses[i + 1];
  add(truss, "path", {
    class: "truss-line",
    d: `M${x} ${top}V${bottom}L${x + 5} ${top + h * 0.55}Z`,
    "stroke-width": 1.2
  });
  for (let k = 0; k <= 5; k++) {
    const y = top + h * k / 5;
    const bulge = 5 * (1 - Math.abs(k - 2.7) / 2.7);
    add(truss, "circle", { class: "truss-dot", cx: x, cy: y, r: 1.5 });
    add(truss, "circle", { class: "truss-dot", cx: x + bulge, cy: y, r: 1.3 });
    if (next) {
      const ny = next[1] + (next[2] - next[1]) * k / 5;
      add(truss, "path", { class: "truss-line", d: `M${x} ${y}L${next[0]} ${ny}`, "stroke-width": 0.7 });
    }
  }
});
```
